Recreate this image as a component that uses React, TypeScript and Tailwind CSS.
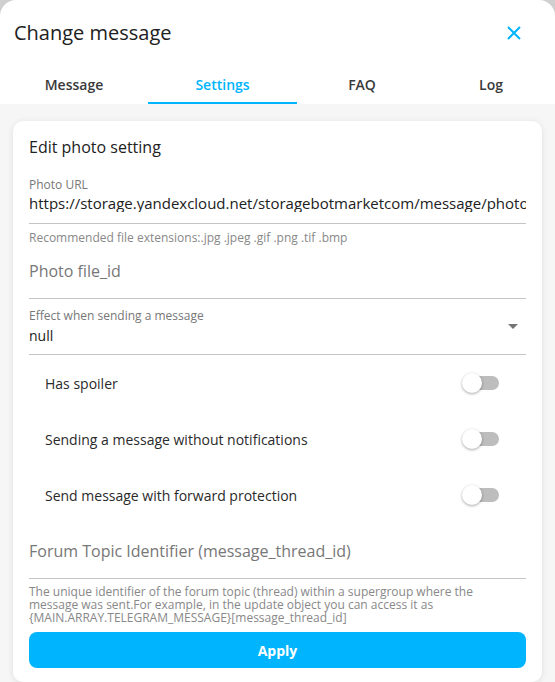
import React, { useState } from 'react';

const tabs = [
  { key: 'message', label: 'Message', w: 'w-[148px]' },
  { key: 'settings', label: 'Settings', w: 'w-[149px]' },
  { key: 'faq', label: 'FAQ', w: 'w-[130px]' },
  { key: 'log', label: 'Log', w: 'flex-1' },
];

const Toggle: React.FC<{ on: boolean; onClick: () => void }> = ({ on, onClick }) => (
  <button type="button" onClick={onClick} className="relative w-[38px] h-[20px] flex items-center">
    <span className={`absolute left-[3px] right-[1px] h-[14px] rounded-full ${on ? 'bg-[#7fd6ff]' : 'bg-[#bdbdbd]'}`} />
    <span className={`absolute top-0 h-[20px] w-[20px] rounded-full shadow-[0_1px_3px_rgba(0,0,0,0.35)] ${on ? 'left-[18px] bg-[#00b4fe]' : 'left-0 bg-white'}`} />
  </button>
);

const App: React.FC = () => {
  const [tab, setTab] = useState('settings');
  const [flags, setFlags] = useState({ spoiler: false, silent: false, protect: false });

  const rows: [keyof typeof flags, string][] = [
    ['spoiler', 'Has spoiler'],
    ['silent', 'Sending a message without notifications'],
    ['protect', 'Send message with forward protection'],
  ];

  return (
    <div className="w-[555px] h-[682px] bg-[#cfcfcf] font-['Open_Sans',sans-serif] text-[#212121] overflow-hidden">
      <div className="h-full flex flex-col bg-white rounded-t-[16px] overflow-hidden">
        <div className="flex items-center justify-between pl-[14px] pr-[33px] pt-[15px] h-[50px]">
          <h1 className="text-[20px] font-medium">Change message</h1>
          <button type="button" className="text-[#00b4fe]">
            <svg width="16" height="16" viewBox="0 0 16 16" fill="none" stroke="currentColor" strokeWidth="2">
              <path d="M2 2 L14 14 M14 2 L2 14" />
            </svg>
          </button>
        </div>
        <div className="flex mt-[16px]">
          {tabs.map(t => (
            <button key={t.key} type="button" onClick={() => setTab(t.key)}
              className={`${t.w} h-[38px] flex items-center justify-center text-[14px] font-semibold border-b-[2px] ${tab === t.key ? 'text-[#00b4fe] border-[#00b4fe]' : 'text-[#3a3a3a] border-transparent'}`}>
              {t.label}
            </button>
          ))}
        </div>
        <div className="flex-1 bg-[#f6f6f6] px-[13px] pt-[17px]">
          <div className="bg-white rounded-[10px] shadow-[0_1px_6px_rgba(0,0,0,0.1)] px-[16px] pt-[14px] pb-[14px]">
            <h2 className="text-[16px] font-medium">Edit photo setting</h2>

            <div className="mt-[17px] border-b border-[#c4c4c4] pb-[11px]">
              <div className="text-[12px] text-[#777]">Photo URL</div>
              <div className="text-[15px] leading-[18px] whitespace-nowrap overflow-hidden">https://storage.yandexcloud.net/storagebotmarketcom/message/photo/</div>
            </div>
            <div className="text-[12px] text-[#888] mt-[5px]">Recommended file extensions:.jpg .jpeg .gif .png .tif .bmp</div>

            <div className="border-b border-[#c4c4c4] h-[52px] pt-[12px] text-[16px] text-[#777]">Photo file_id</div>

            <div className="border-b border-[#c4c4c4] pt-[8px] pb-[8px] flex items-end">
              <div className="flex-1">
                <div className="text-[12px] text-[#777]">Effect when sending a message</div>
                <div className="text-[14px]">null</div>
              </div>
              <svg width="10" height="5" viewBox="0 0 10 5" className="mb-[17px] mr-[8px]"><path d="M0 0 L10 0 L5 5 Z" fill="#757575" /></svg>
            </div>

            <div className="pl-[16px] pr-[26px]">
              {rows.map(([k, label]) => (
                <div key={k} className="h-[56px] flex items-center justify-between">
                  <span className="text-[14px] text-[#2a2a2a]">{label}</span>
                  <Toggle on={flags[k]} onClick={() => setFlags({ ...flags, [k]: !flags[k] })} />
                </div>
              ))}
            </div>

            <div className="border-b border-[#c4c4c4] h-[56px] pt-[16px] text-[16px] text-[#777]">Forum Topic Identifier (message_thread_id)</div>
            <p className="text-[12px] leading-[13px] text-[#888] mt-[6px] pr-[48px]">
              The unique identifier of the forum topic (thread) within a supergroup where the message was sent.For example, in the update object you can access it as {'{MAIN.ARRAY.TELEGRAM_MESSAGE}'}[message_thread_id]
            </p>

            <button type="button" className="mt-[8px] w-full h-[36px] rounded-[8px] bg-[#00b4fe] text-white text-[14px] font-bold">Apply</button>
          </div>
        </div>
      </div>
    </div>
  );
};

export default App;
